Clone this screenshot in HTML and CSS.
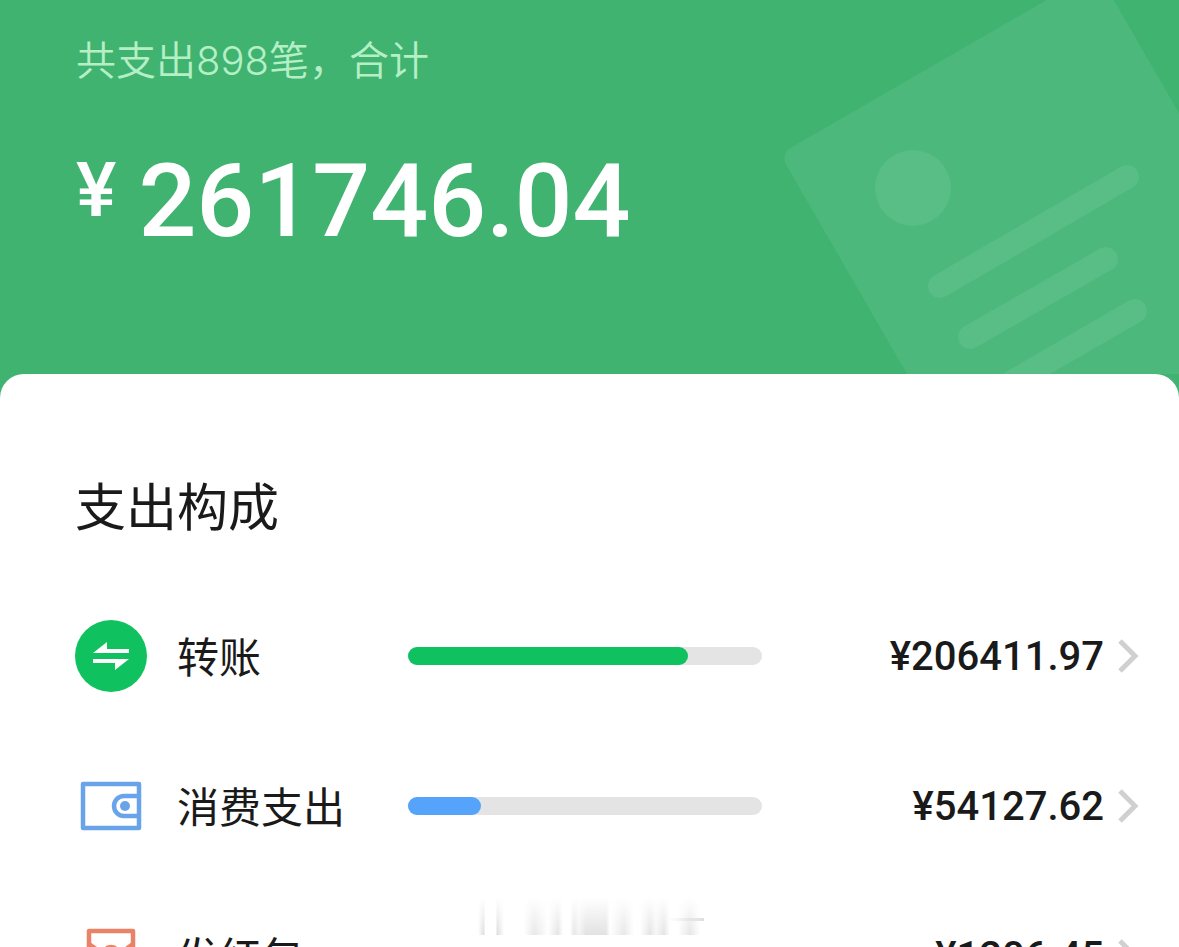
FILE: index.html
```html
<!DOCTYPE html>
<html lang="zh-CN">
<head>
    <meta charset="UTF-8">
    <meta name="viewport" content="width=device-width, initial-scale=1.0">
    <title>支出构成</title>
    <link rel="stylesheet" href="styles.css">
</head>
<body>
    <header class="summary">
        <svg class="summary-art" viewBox="0 0 419 374" aria-hidden="true">
            <rect class="art-card" x="20" y="154" width="366" height="520" rx="12" transform="rotate(-30 20 154)"/>
            <circle class="art-shape" cx="153" cy="188" r="38"/>
            <path class="art-line" d="M180 286 367 177M210 337 346 259M240 389 375 311"/>
        </svg>
        <p class="summary-count">共支出898笔，合计</p>
        <p class="summary-total"><span class="currency">¥</span><span>261746.04</span></p>
    </header>

    <main class="panel">
        <h1>支出构成</h1>

        <a class="row" href="#transfer">
            <svg class="icon" viewBox="0 0 72 72" aria-hidden="true">
                <circle cx="36" cy="36" r="36" fill="#10c160"/>
                <path fill="#fff" d="M54 33H18L32 22V29H54ZM18 39H54L40 50V43H18Z"/>
            </svg>
            <span class="label">转账</span>
            <div class="bar"><div class="bar-fill green" style="width: 79%"></div></div>
            <div class="value">
                <span class="amount">¥206411.97</span>
                <svg class="chevron" viewBox="0 0 22 34" aria-hidden="true"><path d="M2 2 17 17 2 32"/></svg>
            </div>
        </a>

        <a class="row" href="#spending">
            <svg class="icon" viewBox="0 0 72 72" aria-hidden="true">
                <g fill="none" stroke="#69a4ea" stroke-width="4.5" stroke-linejoin="round">
                    <rect x="8" y="14" width="56" height="44"/>
                    <path d="M64 26H49a10 10 0 0 0 0 20H64"/>
                </g>
                <circle cx="50" cy="36" r="5" fill="#69a4ea"/>
            </svg>
            <span class="label">消费支出</span>
            <div class="bar"><div class="bar-fill blue" style="width: 20.7%"></div></div>
            <div class="value">
                <span class="amount">¥54127.62</span>
                <svg class="chevron" viewBox="0 0 22 34" aria-hidden="true"><path d="M2 2 17 17 2 32"/></svg>
            </div>
        </a>

        <a class="row" href="#red-packet">
            <svg class="icon" viewBox="0 0 72 72" aria-hidden="true">
                <g fill="none" stroke="#e98368" stroke-width="4.5" stroke-linejoin="round">
                    <rect x="14" y="11" width="44" height="54"/>
                    <path d="M14 24 28 34M58 24 44 34"/>
                    <circle cx="36" cy="35" r="8"/>
                </g>
            </svg>
            <span class="label">发红包</span>
            <div></div>
            <div class="value">
                <span class="amount">¥1206.45</span>
                <svg class="chevron" viewBox="0 0 22 34" aria-hidden="true"><path d="M2 2 17 17 2 32"/></svg>
            </div>
        </a>

        <!-- faded strip left over the bottom rows -->
        <div class="ghost" aria-hidden="true"></div>
    </main>
</body>
</html>
```
FILE: styles.css
```css
:root {
    --header: #40b371;
    --green: #10c160;
    --blue: #56a3fb;
    --track: #e4e4e4;
    --text: #1a1a1a;
}

* {
    box-sizing: border-box;
}

body {
    margin: 0;
    background: var(--header);
    color: var(--text);
    font-family: Inter, "Noto Sans CJK SC", sans-serif;
}

p,
h1 {
    margin: 0;
    font-weight: 400;
}

.summary {
    position: relative;
    height: 374px;
    padding: 32px 76px 0;
    overflow: hidden;
    color: #fff;
}

.summary-art {
    position: absolute;
    top: 0;
    right: 0;
    width: 419px;
    height: 374px;
}

.art-card {
    fill: #4cb87b;
}

.art-shape {
    fill: #58be85;
}

.art-line {
    fill: none;
    stroke: #58be85;
    stroke-width: 24px;
    stroke-linecap: round;
}

.summary-count {
    position: relative;
    font-size: 40px;
    font-weight: 350;
    line-height: 58px;
    color: #b5efc6;
}

.summary-total {
    position: relative;
    display: flex;
    align-items: flex-start;
    gap: 22px;
    margin-top: 58px;
    font-family: Roboto, sans-serif;
    font-size: 102px;
    font-weight: 500;
    line-height: 106px;
}

.currency {
    font-size: 76px;
    line-height: 84px;
}

.panel {
    position: relative;
    padding: 96px 39px 0 75px;
    background: #fff;
    border-radius: 24px 24px 0 0;
}

h1 {
    font-size: 51px;
    line-height: 76px;
    margin-bottom: 35px;
}

.row {
    display: grid;
    grid-template-columns: 72px 201px 1fr 348px;
    column-gap: 30px;
    align-items: center;
    height: 150px;
    color: inherit;
    text-decoration: none;
}

.icon {
    width: 72px;
    height: 72px;
}

.label {
    padding-bottom: 4px;
    font-size: 42px;
    white-space: nowrap;
}

.bar {
    height: 18px;
    background: var(--track);
    border-radius: 9px;
}

.bar-fill {
    height: 18px;
    border-radius: 9px;
}

.green {
    background: var(--green);
}

.blue {
    background: var(--blue);
}

.value {
    display: flex;
    align-items: center;
    justify-content: flex-end;
    gap: 14px;
}

.amount {
    font-family: Roboto, sans-serif;
    font-size: 40px;
    font-weight: 500;
}

.chevron {
    width: 22px;
    height: 34px;
    fill: none;
    stroke: #d0d0d0;
    stroke-width: 5px;
}

.ghost {
    position: absolute;
    top: 524px;
    left: 50%;
    width: 230px;
    height: 37px;
    margin-left: -112px;
    background:
        linear-gradient(90deg, transparent, #dedede) 190px 20px / 36px 3px no-repeat,
        linear-gradient(#fff, transparent),
        linear-gradient(90deg, #fff 0, #ddd 6px, #fff 7px, #fff 18px, #ddd 19px, #fff 26px, #fff 46px, #e8e8e8 56px, #f4f4f4 64px, #fff 70px, #e4e4e4 80px, #fff 85px, #fff 92px, #e6e6e6 96px, #f4f4f4 101px, #e2e2e2 108px, #e2e2e2 128px, #fff 132px, #e8e8e8 146px, #fff 156px, #fff 162px, #e4e4e4 172px, #f6f6f6 178px, #e4e4e4 186px, #fff 192px, #fff 200px, #e6e6e6 212px, #fff 222px);
}
```
